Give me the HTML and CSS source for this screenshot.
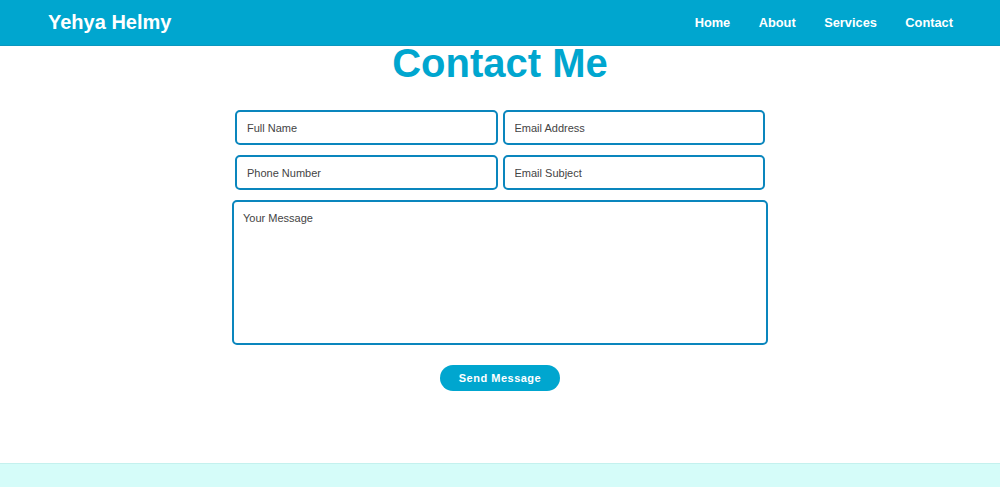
FILE: index.html
```html
<!DOCTYPE html>
<html lang="en">
<head>
    <meta charset="UTF-8">
    <meta name="viewport" content="width=device-width, initial-scale=1.0">
    <title>Contact - Yehya Helmy</title>
    <link rel="stylesheet" href="styles.css">
</head>
<body>
    <header class="site-header">
        <a class="logo" href="#">Yehya Helmy</a>
        <nav class="nav">
            <a href="#">Home</a>
            <a href="#">About</a>
            <a href="#">Services</a>
            <a href="#">Contact</a>
        </nav>
    </header>

    <main class="contact">
        <h1>Contact Me</h1>
        <form class="contact-form">
            <div class="form-row">
                <input type="text" placeholder="Full Name">
                <input type="email" placeholder="Email Address">
            </div>
            <div class="form-row">
                <input type="text" placeholder="Phone Number">
                <input type="text" placeholder="Email Subject">
            </div>
            <textarea placeholder="Your Message"></textarea>
            <button type="submit" class="send-btn">Send Message</button>
        </form>
    </main>

    <footer class="site-footer"></footer>
</body>
</html>
```

FILE: styles.css
```css
* {
    box-sizing: border-box;
}
body {
    margin: 0;
    font-family: "Liberation Sans", Arial, sans-serif;
    background: #fff;
}
.site-header {
    position: fixed;
    top: 0;
    left: 0;
    right: 0;
    height: 46px;
    padding: 0 47px 0 48px;
    display: flex;
    align-items: center;
    justify-content: space-between;
    background: #00a6cf;
    border-bottom: 1px solid #0a97bf;
    z-index: 10;
}
.logo {
    color: #fff;
    font-size: 20px;
    font-weight: bold;
    text-decoration: none;
}
.nav {
    display: flex;
    gap: 28.5px;
}
.nav a {
    color: #fff;
    font-size: 12.8px;
    font-weight: bold;
    text-decoration: none;
}
.contact {
    padding: 40px 0 72px;
}
.contact h1 {
    margin: 0 0 24px;
    text-align: center;
    font-size: 40px;
    line-height: 46px;
    color: #00a6cf;
}
.contact-form {
    width: 536px;
    margin: 0 auto;
    display: flex;
    flex-direction: column;
    align-items: center;
}
.form-row {
    width: 100%;
    padding: 0 3px;
    display: flex;
    gap: 5px;
    margin-bottom: 10px;
}
.form-row input,
.contact-form textarea {
    border: 2px solid #0a86bd;
    border-radius: 5px;
    font-family: inherit;
    font-size: 11px;
    color: #333;
    outline: none;
}
.form-row input {
    flex: 1;
    height: 35px;
    padding: 0 10px;
}
.contact-form textarea {
    width: 100%;
    height: 145px;
    padding: 10px 9px;
    resize: none;
}
::placeholder {
    color: #444;
    opacity: 1;
}
.send-btn {
    margin-top: 20px;
    width: 120px;
    height: 26px;
    border: none;
    border-radius: 13px;
    background: #00a6cf;
    color: #fff;
    font-family: inherit;
    font-size: 11px;
    font-weight: bold;
    letter-spacing: 0.5px;
    cursor: pointer;
}
.site-footer {
    height: 24px;
    background: #d5fcf9;
    border-top: 1px solid #c4f1ee;
}
```
